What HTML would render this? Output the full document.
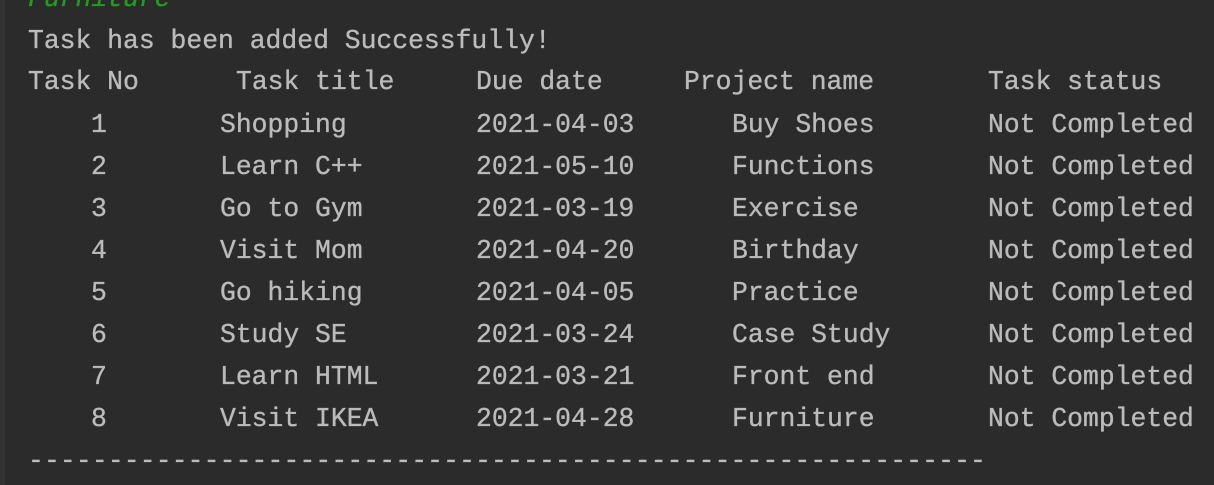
<!DOCTYPE html>
<html><head><style>
html,body{margin:0;padding:0;background:#2b2b2b;width:1214px;height:485px;overflow:hidden;position:relative}
.l{position:absolute;font-family:"Liberation Mono",monospace;font-size:26.4px;line-height:42px;color:#bbbbbb;white-space:pre;height:42px;-webkit-text-stroke:0.35px #bbbbbb}
.edge{position:absolute;left:0;top:0;width:5px;height:485px;background:#313335}
</style></head><body>
<div class="edge"></div>
<div class="l" style="left:28px;top:-22px;color:#1f9e1f;-webkit-text-stroke:0.35px #1f9e1f;font-style:italic">Furniture</div>
<div class="l" style="left:28px;top:20px">Task has been added Successfully!</div>
<div class="l" style="left:28px;top:61px">Task No</div>
<div class="l" style="left:236px;top:61px">Task title</div>
<div class="l" style="left:476px;top:61px">Due date</div>
<div class="l" style="left:684px;top:61px">Project name</div>
<div class="l" style="left:988px;top:61px">Task status</div>

<div class="l" style="left:91px;top:104px">1</div><div class="l" style="left:220px;top:104px">Shopping</div><div class="l" style="left:476px;top:104px">2021-04-03</div><div class="l" style="left:732px;top:104px">Buy Shoes</div><div class="l" style="left:988px;top:104px">Not Completed</div>
<div class="l" style="left:91px;top:146px">2</div><div class="l" style="left:220px;top:146px">Learn C++</div><div class="l" style="left:476px;top:146px">2021-05-10</div><div class="l" style="left:732px;top:146px">Functions</div><div class="l" style="left:988px;top:146px">Not Completed</div>
<div class="l" style="left:91px;top:188px">3</div><div class="l" style="left:220px;top:188px">Go to Gym</div><div class="l" style="left:476px;top:188px">2021-03-19</div><div class="l" style="left:732px;top:188px">Exercise</div><div class="l" style="left:988px;top:188px">Not Completed</div>
<div class="l" style="left:91px;top:230px">4</div><div class="l" style="left:220px;top:230px">Visit Mom</div><div class="l" style="left:476px;top:230px">2021-04-20</div><div class="l" style="left:732px;top:230px">Birthday</div><div class="l" style="left:988px;top:230px">Not Completed</div>
<div class="l" style="left:91px;top:272px">5</div><div class="l" style="left:220px;top:272px">Go hiking</div><div class="l" style="left:476px;top:272px">2021-04-05</div><div class="l" style="left:732px;top:272px">Practice</div><div class="l" style="left:988px;top:272px">Not Completed</div>
<div class="l" style="left:91px;top:314px">6</div><div class="l" style="left:220px;top:314px">Study SE</div><div class="l" style="left:476px;top:314px">2021-03-24</div><div class="l" style="left:732px;top:314px">Case Study</div><div class="l" style="left:988px;top:314px">Not Completed</div>
<div class="l" style="left:91px;top:356px">7</div><div class="l" style="left:220px;top:356px">Learn HTML</div><div class="l" style="left:476px;top:356px">2021-03-21</div><div class="l" style="left:732px;top:356px">Front end</div><div class="l" style="left:988px;top:356px">Not Completed</div>
<div class="l" style="left:91px;top:398px">8</div><div class="l" style="left:220px;top:398px">Visit IKEA</div><div class="l" style="left:476px;top:398px">2021-04-28</div><div class="l" style="left:732px;top:398px">Furniture</div><div class="l" style="left:988px;top:398px">Not Completed</div>

<div class="l" style="left:28px;top:440px;letter-spacing:0.13px">------------------------------------------------------------</div>
</body></html>
